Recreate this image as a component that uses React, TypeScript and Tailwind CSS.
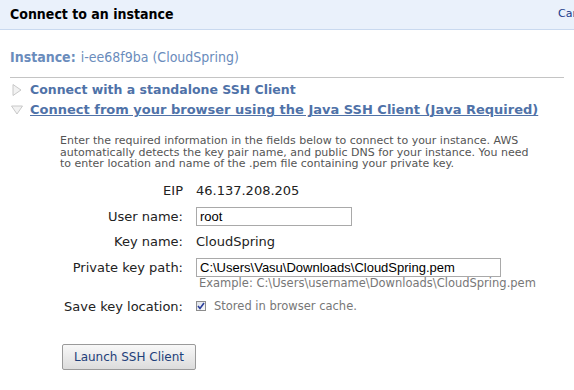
import React from "react";

const V = { fontFamily: '"DejaVu Sans", Verdana, sans-serif' };
const C = { fontFamily: '"DejaVu Sans Condensed", "DejaVu Sans", Tahoma, sans-serif' };
const A = { fontFamily: '"Liberation Sans", Arial, sans-serif' };

export default function App() {
  return (
    <div className="w-[574px] h-[390px] bg-white overflow-hidden relative" style={V}>
      <div className="w-[620px] h-[30px] bg-[#eaf1fb] border-b border-[#c9d9ef] flex items-center">
        <span className="w-[558px] pl-[10px] text-[14px] font-bold text-black whitespace-nowrap" style={C}>Connect to an instance</span>
        <span className="text-[11px] text-[#1a3a8a] whitespace-nowrap">Cancel</span>
      </div>
      <div className="px-[10px]">
        <div className="h-[48px] flex items-end pb-[9px] border-b border-[#c4c4c4] text-[14px] text-[#6a8cbc]" style={C}>
          <span className="font-bold">Instance:</span>
          <span className="ml-[5px]">i-ee68f9ba (CloudSpring)</span>
        </div>
        <div className="pt-[2px]">
          <div className="flex items-center h-[20px]">
            <svg width="10" height="12" viewBox="0 0 10 12" className="ml-[2px] mr-[8px]">
              <path d="M1 0.5 L9 6 L1 11.5 Z" fill="#f2f2f2" stroke="#c8c8c8" />
            </svg>
            <span className="text-[12.5px] font-bold text-[#4f72a8] whitespace-nowrap">Connect with a standalone SSH Client</span>
          </div>
          <div className="flex items-center h-[20px]">
            <svg width="12" height="10" viewBox="0 0 12 10" className="ml-[1px] mr-[7px]">
              <path d="M0.5 1 L11.5 1 L6 9 Z" fill="#f2f2f2" stroke="#c8c8c8" />
            </svg>
            <span className="text-[13px] font-bold text-[#4f72a8] underline whitespace-nowrap">Connect from your browser using the Java SSH Client (Java Required)</span>
          </div>
        </div>
        <div className="ml-[50px] w-[476px] pt-[15px] text-[11px] leading-[11.6px] text-[#555]">
          Enter the required information in the fields below to connect to your instance. AWS automatically detects the key pair name, and public DNS for your instance. You need to enter location and name of the .pem file containing your private key.
        </div>
        <div className="mt-[11px] text-[13px] text-[#222] flex flex-col">
          <div className="flex items-center h-[20px]">
            <div className="w-[173px] text-right">EIP</div>
            <div className="ml-[13px]">46.137.208.205</div>
          </div>
          <div className="flex items-center h-[19px] mt-[6px]">
            <div className="w-[173px] text-right">User name:</div>
            <div className="ml-[13px] w-[156px] h-[19px] border border-[#a9a9a9] flex items-center px-[3px] text-[13px] text-black" style={A}>root</div>
          </div>
          <div className="flex items-center h-[20px] mt-[6px]">
            <div className="w-[173px] text-right">Key name:</div>
            <div className="ml-[13px]">CloudSpring</div>
          </div>
          <div className="flex items-center h-[19px] mt-[6px]">
            <div className="w-[173px] text-right">Private key path:</div>
            <div className="ml-[13px] w-[305px] h-[19px] border border-[#a9a9a9] flex items-center px-[3px] text-[13px] text-black" style={A}>C:\Users\Vasu\Downloads\CloudSpring.pem</div>
          </div>
          <div className="flex mt-[1px] h-[12px] items-center">
            <div className="w-[173px]" />
            <div className="ml-[16px] text-[11.5px] text-[#777] whitespace-nowrap">Example: C:\Users\username\Downloads\CloudSpring.pem</div>
          </div>
          <div className="flex items-center h-[20px] mt-[7px]">
            <div className="w-[173px] text-right">Save key location:</div>
            <div className="ml-[13px] flex items-center text-[11.5px] text-[#777]">
              <span className="w-[10px] h-[10px] border border-[#8c8c8c] bg-gradient-to-br from-[#dfe3ea] to-[#f8f9fb] flex items-center justify-center mr-[8px] -mt-[1px]">
                <svg width="8" height="8" viewBox="0 0 8 8"><path d="M1 4 L3 6.5 L7 1" stroke="#2a3e9a" strokeWidth="1.6" fill="none" /></svg>
              </span>
              Stored in browser cache.
            </div>
          </div>
        </div>
        <div className="pl-[52px] mt-[27px]">
          <button className="w-[134px] h-[26px] border border-[#9a9a9a] rounded-[2px] bg-gradient-to-b from-[#f8f8f8] to-[#dcdcdc] text-[12px] text-[#1e3f7a]" style={V}>Launch SSH Client</button>
        </div>
      </div>
    </div>
  );
}
